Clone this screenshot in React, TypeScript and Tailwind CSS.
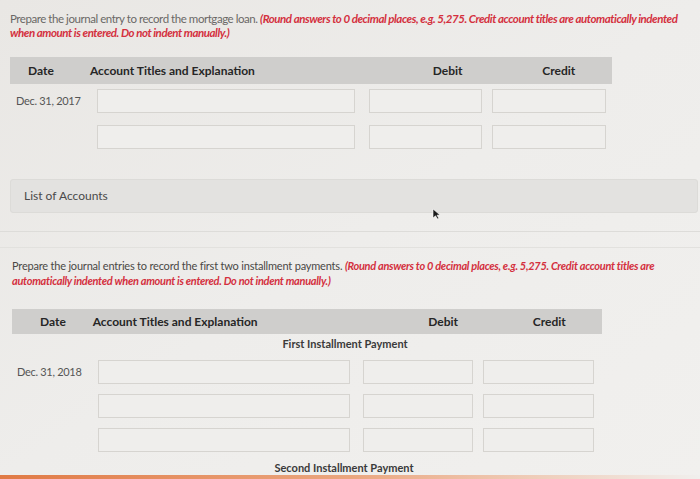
import React from "react";

const font = { fontFamily: "Lato, 'Open Sans', sans-serif" };

function Field({ w }: { w: string }) {
  return <div className={`${w} h-[24px] shrink-0 border border-[#d6d4d0] bg-[#efeeec]`} />;
}

function HeaderBar({ second }: { second?: boolean }) {
  return (
    <div
      className={`flex items-center bg-[#cfcecc] text-[12px] font-bold text-[#262626] ${
        second ? "ml-[12px] h-[25px] w-[590px]" : "ml-[10px] h-[27px] w-[602px]"
      }`}
    >
      <span className={second ? "ml-[28px] w-[55px]" : "ml-[18px] w-[64px]"}>Date</span>
      <span className="w-[310px]">Account Titles and Explanation</span>
      <span className={second ? "w-[112px] text-center" : "w-[120px] text-center"}>Debit</span>
      <span className="w-[110px] text-center">Credit</span>
    </div>
  );
}

function Row({ date, second }: { date?: string; second?: boolean }) {
  return (
    <div className={`flex items-center ${second ? "pl-[17px]" : "pl-[16px]"}`}>
      <span className="w-[81px] text-[11px] tracking-[-0.3px] text-[#555]">{date}</span>
      <Field w={second ? "w-[252px]" : "w-[258px]"} />
      <div className={second ? "w-[13px]" : "w-[14px]"} />
      <Field w={second ? "w-[110px]" : "w-[113px]"} />
      <div className="w-[10px]" />
      <Field w={second ? "w-[111px]" : "w-[114px]"} />
    </div>
  );
}

export default function App() {
  return (
    <div
      className="relative h-[479px] w-[700px] overflow-hidden bg-gradient-to-br from-[#e9e7e4] via-[#eeedeb] to-[#f1f0ee]"
      style={font}
    >
      <p className="px-[10px] pt-[12px] text-[11.5px] leading-[14px] tracking-[-0.45px] text-[#6a6866]">
        Prepare the journal entry to record the mortgage loan.{" "}
        <em className="font-bold text-[#d4303e]">
          (Round answers to 0 decimal places, e.g. 5,275. Credit account titles are automatically indented when amount
          is entered. Do not indent manually.)
        </em>
      </p>

      <div className="mt-[17px]">
        <HeaderBar />
      </div>
      <div className="mt-[5px] flex flex-col gap-[12px]">
        <Row date="Dec. 31, 2017" />
        <Row />
      </div>

      <div className="ml-[10px] mt-[30px] flex h-[34px] w-[688px] items-center rounded-[3px] border border-[#dcdbd8] bg-[#e3e2e0] pl-[13px] text-[12px] text-[#4a4a4a]">
        List of Accounts
      </div>

      <div className="mt-[18px] h-px w-full bg-[#dddcd9]" />
      <div className="mt-[15px] h-px w-full bg-[#e2e1de]" />

      <p className="px-[12px] pt-[10px] text-[11px] leading-[15px] tracking-[-0.2px] text-[#4a4846]">
        Prepare the journal entries to record the first two installment payments.{" "}
        <em className="font-bold tracking-[-0.3px] text-[#d4303e]">
          (Round answers to 0 decimal places, e.g. 5,275. Credit account titles are automatically indented when amount
          is entered. Do not indent manually.)
        </em>
      </p>

      <div className="mt-[21px]">
        <HeaderBar second />
      </div>
      <p className="mt-[3px] w-[690px] text-center text-[11px] font-bold leading-[14px] text-[#3a3a3a]">
        First Installment Payment
      </p>
      <div className="mt-[9px] flex flex-col gap-[10px]">
        <Row date="Dec. 31, 2018" second />
        <Row second />
        <Row second />
      </div>
      <p className="mt-[9px] w-[688px] text-center text-[11px] font-bold leading-[14px] text-[#3a3a3a]">
        Second Installment Payment
      </p>

      <div className="absolute bottom-0 left-0 h-[4px] w-[700px] bg-gradient-to-r from-[#e07a45] via-[#eaa67f] to-[#f0efed]" />

      <svg className="absolute left-[432px] top-[208px]" width="9" height="12" viewBox="0 0 9 12">
        <path d="M1 1 L1 10 L3.5 7.8 L5.5 11 L6.8 10.3 L5 7.2 L8 7 Z" fill="#1a1a1a" stroke="#fff" strokeWidth="0.6" />
      </svg>
    </div>
  );
}
